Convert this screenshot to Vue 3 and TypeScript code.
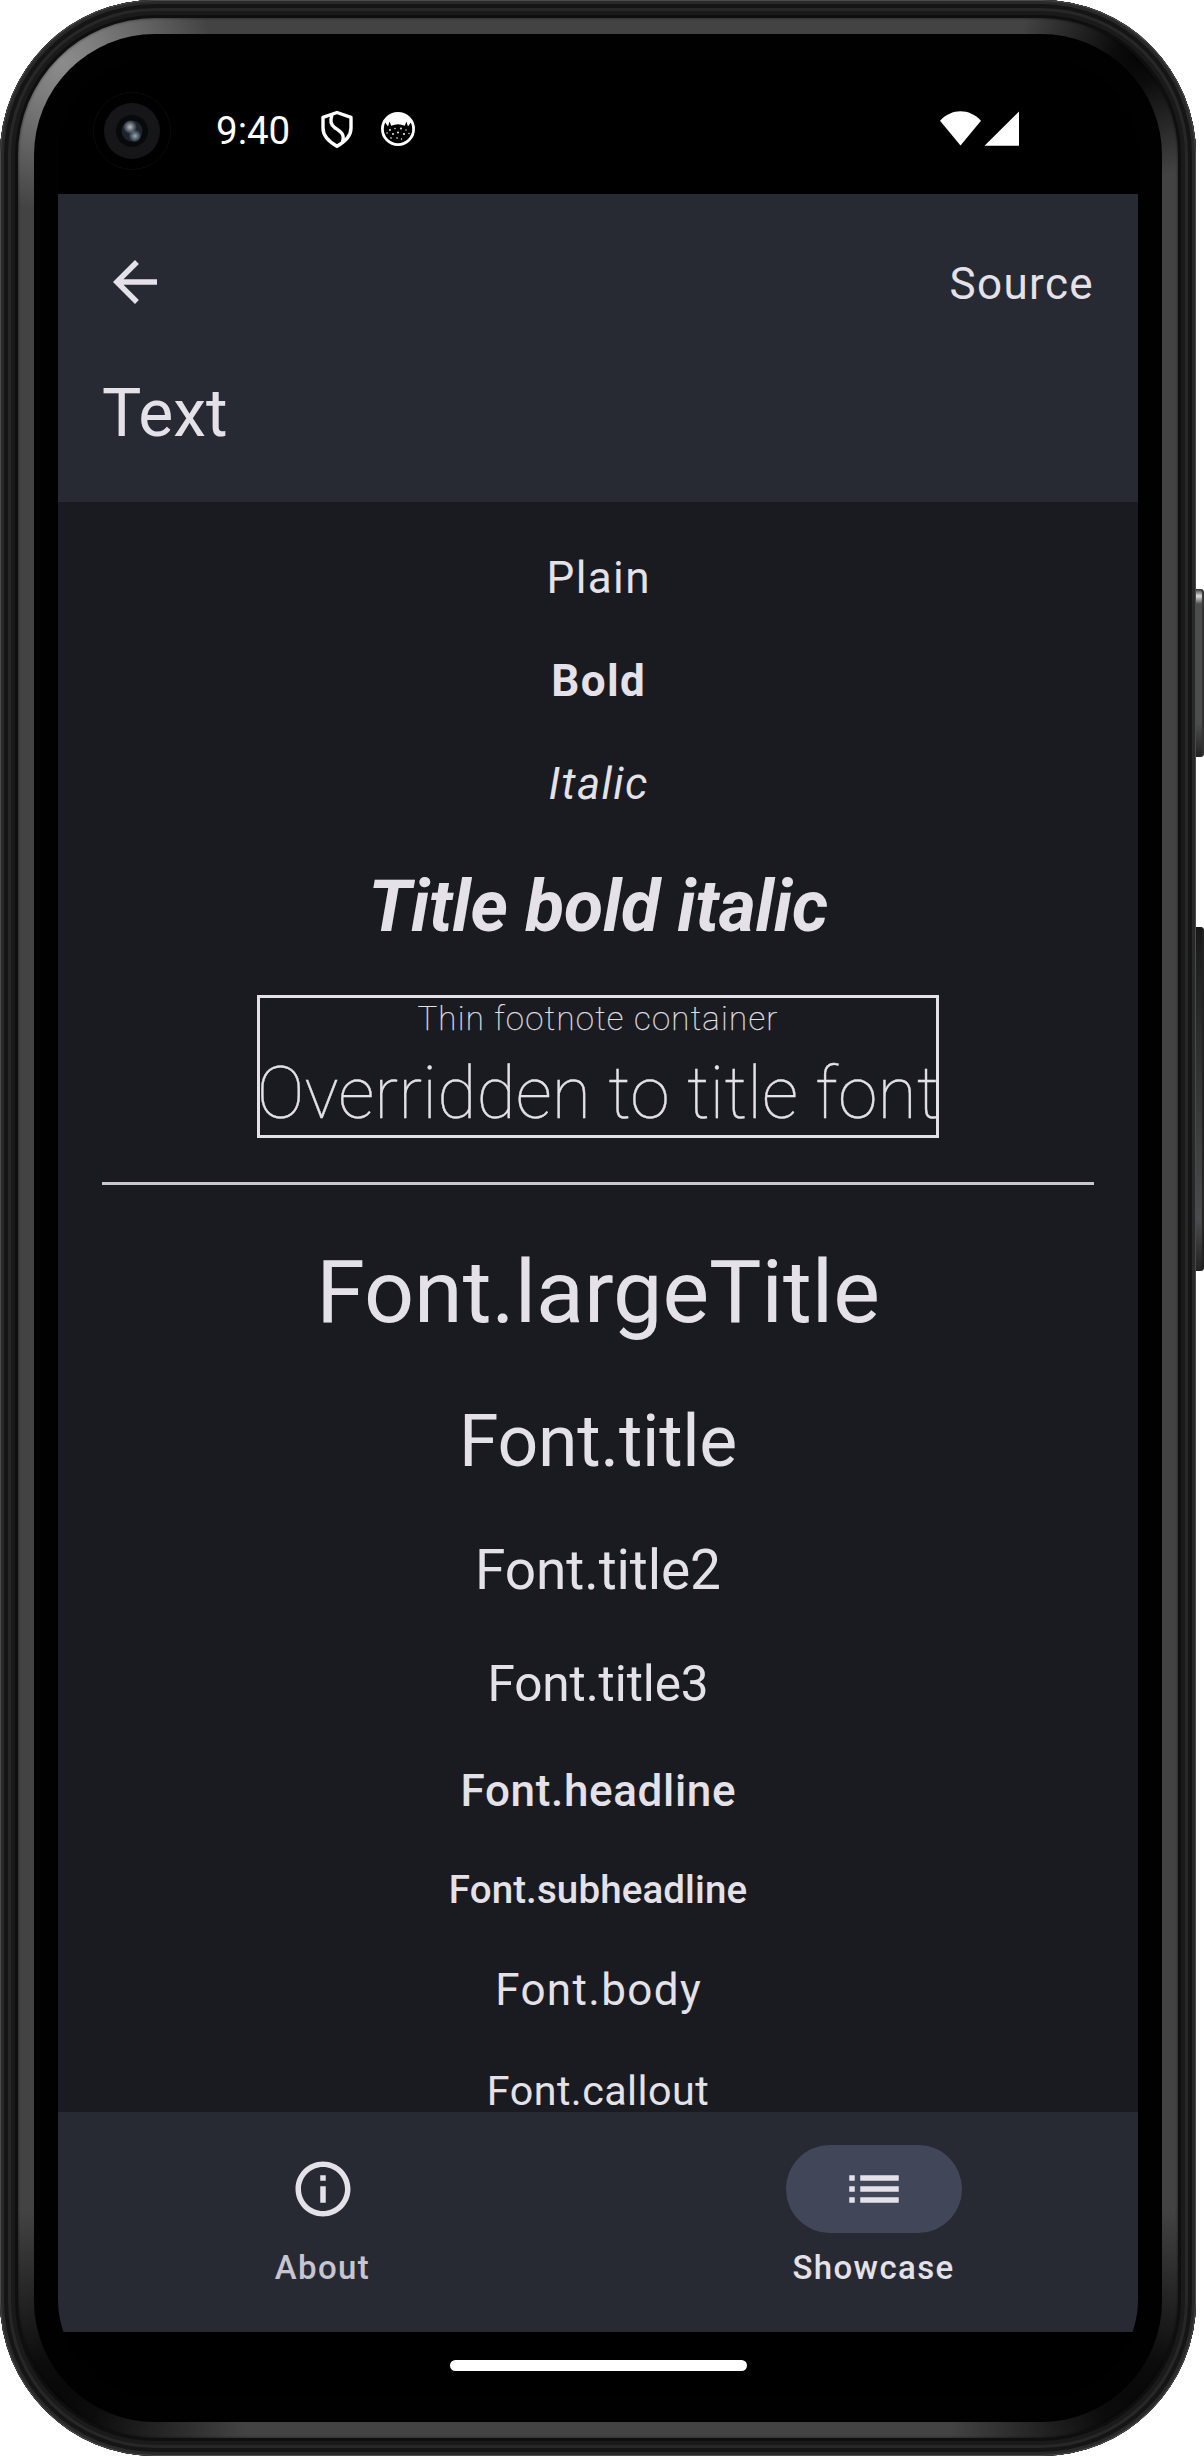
<script setup lang="ts">
interface Sample {
  text: string
  style: string
}

const styled: Sample[] = [
  { text: 'Plain', style: 'plain' },
  { text: 'Bold', style: 'bold' },
  { text: 'Italic', style: 'italic' },
  { text: 'Title bold italic', style: 'title-bold-italic' },
]

const fonts: Sample[] = [
  { text: 'Font.largeTitle', style: 'large-title' },
  { text: 'Font.title', style: 'title' },
  { text: 'Font.title2', style: 'title2' },
  { text: 'Font.title3', style: 'title3' },
  { text: 'Font.headline', style: 'headline' },
  { text: 'Font.subheadline', style: 'subheadline' },
  { text: 'Font.body', style: 'body' },
  { text: 'Font.callout', style: 'callout' },
]
</script>

<template>
  <div class="stage">
    <div class="key power"></div>
    <div class="key volume"></div>
    <div class="shell">
      <div class="rim">
        <div class="glass">
          <div class="screen">
            <header class="status">
              <svg class="camera" width="80" height="80" viewBox="0 0 80 80">
                <defs>
                  <radialGradient id="lensA"><stop offset="0" stop-color="#b9bec4" /><stop offset="1" stop-color="#b9bec4" stop-opacity="0" /></radialGradient>
                  <radialGradient id="lensB"><stop offset="0" stop-color="#93aab5" /><stop offset="1" stop-color="#93aab5" stop-opacity="0" /></radialGradient>
                </defs>
                <circle cx="40" cy="40" r="38.5" fill="none" stroke="#0b0b0b" />
                <circle cx="40" cy="40" r="28" fill="#161618" />
                <circle cx="40" cy="40" r="16" fill="#08090b" />
                <circle cx="40" cy="40" r="10.5" fill="#1c232c" />
                <circle cx="38" cy="36" r="7" fill="url(#lensA)" />
                <circle cx="43" cy="45" r="6.5" fill="url(#lensB)" />
              </svg>
              <span class="clock">9:40</span>
              <svg class="shield" width="34" height="40" viewBox="0 0 34 40" fill="none" stroke="#fff" stroke-width="3.4" stroke-linejoin="round">
                <path d="M17 3.5 L31 8.4 V19 C31 27.5 25.5 32.5 17 37.2 C8.5 32.5 3 27.5 3 19 V8.4 Z" />
                <path d="M12 6 C9.8 12 10.5 15.5 14.5 18.5 C21 23 25 25 22.5 33" />
              </svg>
              <svg class="cat" width="36" height="36" viewBox="0 0 36 36">
                <circle cx="18" cy="18" r="15.6" fill="#000" stroke="#fff" stroke-width="2.8" />
                <path fill="#fff" d="M4.5 10.5 C8 5 12 2 18 2 S28 5 31.5 10.5 L28 15.5 L26.4 10.6 L24.8 14.8 Q18 11.8 11.2 14.8 L9.6 10.6 L8 15.5 Z" />
                <g fill="#fff">
                  <circle cx="10" cy="19" r=".9" /><circle cx="15" cy="17.5" r=".7" /><circle cx="21" cy="17.5" r=".9" /><circle cx="26" cy="19" r=".7" />
                  <circle cx="7" cy="22" r=".7" /><circle cx="13" cy="23" r=".9" /><circle cx="18" cy="21.5" r=".9" /><circle cx="24" cy="23" r="1" />
                  <circle cx="29" cy="22.5" r=".7" /><circle cx="11" cy="27" r=".8" /><circle cx="17" cy="27" r=".8" /><circle cx="21.5" cy="28" r=".7" />
                </g>
              </svg>
              <svg class="signals" width="80" height="36" viewBox="0 0 80 36" fill="#fff">
                <path d="M0 9.8 C11.5 -2.9 29.5 -2.9 41 9.8 L20.5 34.6 Z" />
                <path d="M44.5 34.8 L79 .4 V34.8 Z" />
              </svg>
            </header>

            <section class="app-bar">
              <div class="actions">
                <svg width="66" height="66" viewBox="0 0 24 24" fill="#e4e1e9">
                  <path d="M20 11H7.83l5.59-5.59L12 4l-8 8 8 8 1.41-1.41L7.83 13H20v-2z" />
                </svg>
                <span class="source">Source</span>
              </div>
              <h1>Text</h1>
            </section>

            <main class="content">
              <div v-for="s in styled" :key="s.text" class="line" :class="s.style">{{ s.text }}</div>
              <div class="framed">
                <div class="line footnote">Thin footnote container</div>
                <div class="line overridden">Overridden to title font</div>
              </div>
              <div class="divider"></div>
              <div v-for="s in fonts" :key="s.text" class="line" :class="s.style">{{ s.text }}</div>
            </main>

            <nav class="tabs">
              <div class="tab">
                <span class="indicator">
                  <svg width="66" height="66" viewBox="0 0 24 24" fill="#e4e1e9">
                    <path d="M11 7h2v2h-2zm0 4h2v6h-2zm1-9C6.48 2 2 6.48 2 12s4.48 10 10 10 10-4.48 10-10S17.52 2 12 2zm0 18c-4.41 0-8-3.59-8-8s3.59-8 8-8 8 3.59 8 8-3.59 8-8 8z" />
                  </svg>
                </span>
                <span class="label">About</span>
              </div>
              <div class="tab selected">
                <span class="indicator">
                  <svg width="66" height="66" viewBox="0 0 24 24" fill="#e4e1e9">
                    <path d="M3 13h2v-2H3v2zm0 4h2v-2H3v2zm0-8h2V7H3v2zm4 4h14v-2H7v2zm0 4h14v-2H7v2zM7 7v2h14V7H7z" />
                  </svg>
                </span>
                <span class="label">Showcase</span>
              </div>
            </nav>
            <footer class="gesture"><span></span></footer>
          </div>
        </div>
      </div>
    </div>
  </div>
</template>

<style>
body {
  margin: 0;
  background: #fff;
}
</style>

<style scoped>
.stage {
  position: relative;
  width: 1204px;
  height: 2456px;
  overflow: hidden;
  background: #fff;
  font-family: Roboto, "Liberation Sans", sans-serif;
  color: #e4e1e9;
}
.key {
  position: absolute;
  left: 1190px;
  width: 14px;
  box-sizing: border-box;
  border-radius: 0 4px 4px 0;
}
.power {
  top: 589px;
  height: 168px;
  background: linear-gradient(180deg, #333 0, #ddd 7px, #4b4c4c 15px, #4b4c4c 80%, #222 100%);
  box-shadow: inset -2px 0 1px #333;
}
.volume {
  top: 927px;
  height: 344px;
  background: linear-gradient(180deg, #181818 0, #242626 20%, #4a4b4c 85%, #222 100%);
  box-shadow: inset -2px 0 1px #222;
}
.shell {
  position: relative;
  box-sizing: border-box;
  width: 1196px;
  height: 2456px;
  padding: 18px;
  border-radius: 155px;
  background: #0c0c0c;
  box-shadow: inset 0 0 0 1px #4a4a4a, inset 0 0 0 4px #292929, inset 0 0 0 8px #151515,
    inset 0 0 0 11px #272727, inset 0 0 0 15px #1a1a1a, inset 0 0 0 18px #0f0f0f;
}
.rim {
  box-sizing: border-box;
  height: 100%;
  padding: 16px;
  border-radius: 137px;
  background:
    radial-gradient(circle at 45px 45px, #8c8c8c 0, #7c7c7c 40px, transparent 150px),
    radial-gradient(circle at calc(100% - 40px) 40px, #060606 0, #0c0c0c 25px, transparent 120px),
    radial-gradient(circle at 40px calc(100% - 40px), #080808 0, #0c0c0c 40px, transparent 190px),
    radial-gradient(circle at calc(100% - 40px) calc(100% - 40px), #080808 0, #0c0c0c 40px, transparent 190px),
    #434343;
  box-shadow: inset 0 0 2px 1px rgba(0, 0, 0, 0.3);
}
.glass {
  box-sizing: border-box;
  height: 100%;
  padding: 24px;
  border-radius: 121px;
  background: #010101;
}
.screen {
  display: flex;
  flex-direction: column;
  width: 1080px;
  height: 2339px;
  overflow: hidden;
  border-radius: 97px;
  background: #000;
}
.status {
  display: flex;
  flex: none;
  height: 136px;
}
.camera {
  margin: 33px 0 0 34px;
}
.clock {
  width: 77px;
  margin: 50px 0 0 44px;
  font-size: 38.5px;
  line-height: 45px;
  color: #fff;
}
.shield {
  margin: 51px 0 0 27px;
}
.cat {
  margin: 53px 0 0 26px;
}
.signals {
  margin: 53px 118px 0 auto;
}
.app-bar {
  flex: none;
  box-sizing: border-box;
  height: 308px;
  padding: 55px 44px 0;
  background: #282a33;
}
.actions {
  display: flex;
  align-items: center;
  justify-content: space-between;
  height: 66px;
}
.source {
  padding-top: 3px;
  font-size: 44px;
  line-height: 52px;
  letter-spacing: 1.375px;
}
h1 {
  margin: 60px 0 0;
  font-size: 66px;
  font-weight: 400;
  line-height: 77px;
}
.content {
  display: flex;
  flex-direction: column;
  align-items: center;
  flex: none;
  height: 1610px;
  overflow: hidden;
  background: #1a1b20;
}
.line {
  flex: none;
  white-space: nowrap;
}
.plain, .bold, .italic, .headline, .body {
  margin-top: 51px;
  padding-left: 1.375px;
  font-size: 44px;
  line-height: 52px;
  letter-spacing: 1.375px;
}
.plain {
  margin-top: 50px;
}
.bold {
  font-weight: 700;
}
.italic {
  font-style: italic;
}
.title-bold-italic {
  margin-top: 55px;
  font-size: 71.5px;
  font-weight: 700;
  font-style: italic;
  line-height: 83px;
  letter-spacing: -0.2px;
}
.framed {
  display: flex;
  flex-direction: column;
  align-items: center;
  flex: none;
  box-sizing: border-box;
  width: 682px;
  height: 143px;
  margin-top: 47px;
  border: 3px solid #e4e1e9;
}
.footnote {
  margin-top: 1px;
  font-size: 33px;
  font-weight: 100;
  line-height: 39px;
  letter-spacing: 1.26px;
  -webkit-text-stroke: 0.25px #e4e1e9;
}
.overridden {
  margin-top: 14px;
  font-size: 71.5px;
  font-weight: 100;
  line-height: 83px;
  letter-spacing: 0.1px;
  -webkit-text-stroke: 0.4px #e4e1e9;
}
.divider {
  flex: none;
  width: 992px;
  height: 3px;
  margin-top: 44px;
  background: #cac6cc;
}
.large-title {
  margin-top: 55px;
  font-size: 88px;
  line-height: 103px;
}
.title {
  margin-top: 57px;
  font-size: 71.5px;
  line-height: 83px;
  letter-spacing: -0.28px;
}
.title2 {
  margin-top: 55px;
  font-size: 55px;
  line-height: 64px;
  letter-spacing: -0.1px;
}
.title3 {
  margin-top: 53px;
  font-size: 49.5px;
  line-height: 58px;
  letter-spacing: -0.1px;
}
.headline {
  margin-top: 52px;
  padding-left: 0.65px;
  font-weight: 500;
  letter-spacing: 0.65px;
}
.subheadline {
  margin-top: 50px;
  font-size: 38.5px;
  font-weight: 500;
  line-height: 45px;
  letter-spacing: 0.12px;
}
.body {
  margin-top: 52px;
}
.callout {
  margin-top: 51px;
  font-size: 41.25px;
  line-height: 48px;
  letter-spacing: 0.45px;
}
.tabs {
  display: flex;
  flex: none;
  gap: 22px;
  box-sizing: border-box;
  height: 220px;
  padding-top: 33px;
  background: #282a33;
}
.tab {
  display: flex;
  flex: 1;
  flex-direction: column;
  align-items: center;
}
.indicator {
  display: flex;
  align-items: center;
  justify-content: center;
  width: 176px;
  height: 88px;
  border-radius: 44px;
}
.selected .indicator {
  background: #424659;
}
.label {
  margin-top: 15px;
  font-size: 33px;
  font-weight: 500;
  line-height: 39px;
  letter-spacing: 1.375px;
  color: #c6c5d0;
}
.selected .label {
  color: #e4e1e9;
}
.gesture {
  display: flex;
  justify-content: center;
  padding-top: 28px;
}
.gesture span {
  width: 297px;
  height: 11px;
  border-radius: 6px;
  background: #fff;
}
</style>
